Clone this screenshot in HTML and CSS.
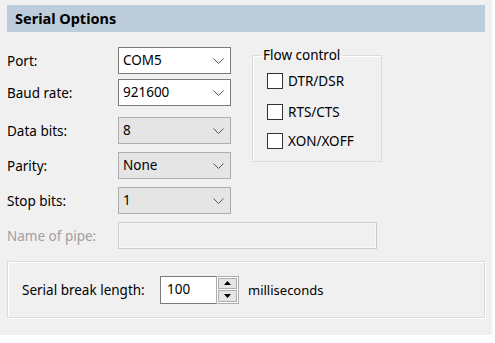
FILE: index.html
```html
<!DOCTYPE html>
<html lang="en">
<head>
    <meta charset="UTF-8">
    <meta name="viewport" content="width=device-width, initial-scale=1.0">
    <title>Serial Options</title>
    <link rel="stylesheet" href="styles.css">
</head>
<body>
    <div class="panel">
        <div class="header">Serial Options</div>

        <div class="top">
            <div class="fields">
                <div class="row row-port">
                    <label>Port:</label>
                    <div class="combo editable"><span>COM5</span><svg class="chev" width="11" height="6" viewBox="0 0 11 6"><polyline points="0.5,0.5 5.5,5.5 10.5,0.5" fill="none" stroke="#555" stroke-width="1"/></svg></div>
                </div>
                <div class="row row-baud">
                    <label>Baud rate:</label>
                    <div class="combo editable"><span>921600</span><svg class="chev" width="11" height="6" viewBox="0 0 11 6"><polyline points="0.5,0.5 5.5,5.5 10.5,0.5" fill="none" stroke="#555" stroke-width="1"/></svg></div>
                </div>
                <div class="row row-data">
                    <label>Data bits:</label>
                    <div class="combo"><span>8</span><svg class="chev" width="11" height="6" viewBox="0 0 11 6"><polyline points="0.5,0.5 5.5,5.5 10.5,0.5" fill="none" stroke="#555" stroke-width="1"/></svg></div>
                </div>
                <div class="row row-next">
                    <label>Parity:</label>
                    <div class="combo"><span>None</span><svg class="chev" width="11" height="6" viewBox="0 0 11 6"><polyline points="0.5,0.5 5.5,5.5 10.5,0.5" fill="none" stroke="#555" stroke-width="1"/></svg></div>
                </div>
                <div class="row row-next">
                    <label>Stop bits:</label>
                    <div class="combo"><span>1</span><svg class="chev" width="11" height="6" viewBox="0 0 11 6"><polyline points="0.5,0.5 5.5,5.5 10.5,0.5" fill="none" stroke="#555" stroke-width="1"/></svg></div>
                </div>
            </div>

            <fieldset class="flow">
                <legend>Flow control</legend>
                <label class="check check-first"><input type="checkbox">DTR/DSR</label>
                <label class="check check-second"><input type="checkbox">RTS/CTS</label>
                <label class="check check-third"><input type="checkbox">XON/XOFF</label>
            </fieldset>
        </div>

        <div class="row row-next">
            <label class="disabled">Name of pipe:</label>
            <div class="pipe"></div>
        </div>

        <div class="group">
            <label>Serial break length:</label>
            <div class="spinner">
                <div class="spin-edit">100</div>
                <div class="spin-buttons">
                    <div class="spin-btn"><svg width="7" height="4" viewBox="0 0 7 4"><polygon points="3.5,0 7,4 0,4" fill="#000"/></svg></div>
                    <div class="spin-btn"><svg width="7" height="4" viewBox="0 0 7 4"><polygon points="0,0 7,0 3.5,4" fill="#000"/></svg></div>
                </div>
            </div>
            <span class="unit">milliseconds</span>
        </div>
    </div>
</body>
</html>
```

FILE: styles.css
```css
body {
    margin: 0;
    background-color: #ffffff;
    font-family: "Noto Sans", "Open Sans", sans-serif;
    font-size: 13.5px;
    color: #000;
}
.panel {
    width: 492px;
    height: 335px;
    background-color: #f0f0f0;
    padding: 5px 7px 0;
    box-sizing: border-box;
}
.header {
    height: 27px;
    line-height: 27px;
    background-color: #bdccda;
    padding-left: 8px;
    font-size: 14.5px;
    font-weight: bold;
}
.top {
    display: flex;
    margin-top: 15px;
}
.fields {
    width: 224px;
}
.row {
    display: flex;
    align-items: center;
    height: 27px;
}
.row label {
    width: 111px;
}
.row-baud {
    margin-top: 5px;
}
.row-data {
    margin-top: 11px;
}
.row-next {
    margin-top: 8px;
}
.combo {
    width: 113px;
    height: 27px;
    box-sizing: border-box;
    border: 1px solid #adadad;
    background-color: #e5e5e5;
    display: flex;
    align-items: center;
    justify-content: space-between;
    padding: 0 6px 0 4px;
}
.combo.editable {
    background-color: #fff;
    border-color: #7a7a7a;
}
.combo span {
    line-height: 25px;
}
.disabled {
    color: #a0a0a0;
}
.pipe {
    width: 259px;
    height: 27px;
    box-sizing: border-box;
    border: 1px solid #cccccc;
    background-color: #f0f0f0;
    box-shadow: inset 0 0 0 1px #f8f8f8;
}
.flow {
    margin: -1px 0 0 21px;
    padding: 8px 0 0 14px;
    width: 130px;
    height: 116px;
    box-sizing: border-box;
    border: 1px solid #dcdcdc;
    box-shadow: inset 1px 1px 0 #fff;
    min-width: 0;
}
.flow legend {
    padding: 0 2px;
    margin-left: -6px;
    line-height: 18px;
}
.check {
    display: flex;
    align-items: center;
    gap: 5px;
    height: 17px;
}
.check-second {
    margin-top: 14px;
}
.check-third {
    margin-top: 12px;
}
.check input {
    appearance: none;
    width: 16px;
    height: 16px;
    margin: 0;
    border: 1px solid #333;
    background-color: #fff;
}
.group {
    margin-top: 12px;
    height: 57px;
    box-sizing: border-box;
    border: 1px solid #dcdcdc;
    box-shadow: inset 1px 1px 0 #fff, 1px 1px 0 #fff;
    display: flex;
    align-items: center;
    padding: 0 0 0 14px;
}
.group label {
    width: 138px;
}
.spinner {
    display: flex;
    height: 28px;
}
.spin-edit {
    width: 56px;
    height: 28px;
    box-sizing: border-box;
    border: 1px solid #7a7a7a;
    border-right: none;
    background-color: #fff;
    padding-left: 6px;
    line-height: 25px;
}
.spin-buttons {
    width: 23px;
    display: flex;
    flex-direction: column;
    border: 1px solid #adadad;
    box-sizing: border-box;
    background-color: #fff;
    padding: 1px;
    gap: 1px;
}
.spin-btn {
    flex: 1;
    background-color: #e5e5e5;
    border: 1px solid #adadad;
    display: flex;
    align-items: center;
    justify-content: center;
}
.unit {
    margin-left: 9px;
    font-size: 13px;
}
```
